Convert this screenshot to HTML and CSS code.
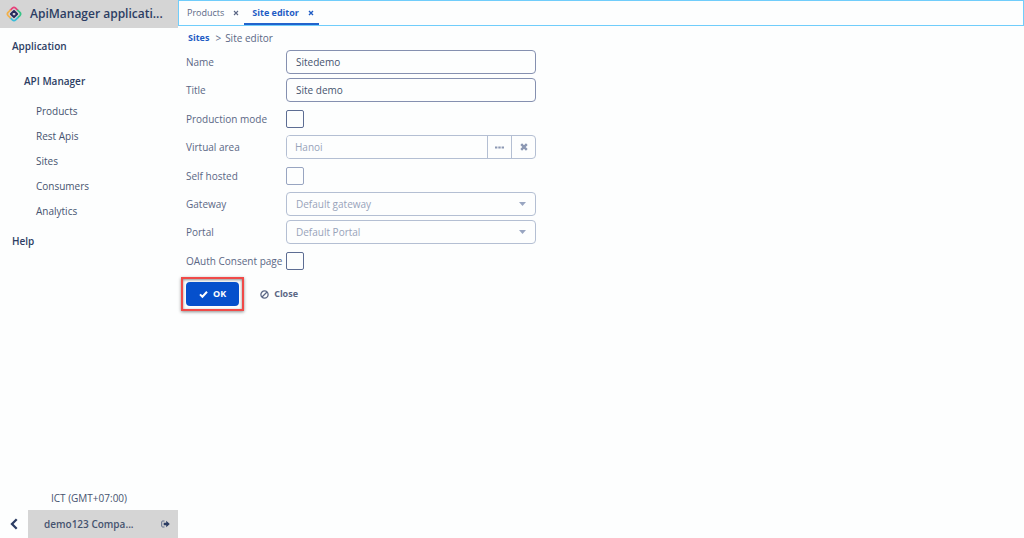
FILE: index.html
```html
<!DOCTYPE html>
<html lang="en">
<head>
<meta charset="utf-8">
<meta name="viewport" content="width=device-width, initial-scale=1">
<title>ApiManager application</title>
<link rel="stylesheet" href="styles.css">
</head>
<body>
<div class="app">
  <aside class="sidebar">
    <header class="brand">
      <svg class="brand-logo" viewBox="0 0 16 16" aria-hidden="true">
        <g fill="none" stroke-width="1.7" stroke-linecap="round" stroke-linejoin="round">
          <path stroke="#e8407a" d="M4.4 4.2 6.4 2.1Q8 .6 9.6 2.1L11.6 4.2"/>
          <path stroke="#35c486" d="M11.8 4.4 13.9 6.4Q15.4 8 13.9 9.6L11.8 11.6"/>
          <path stroke="#38bcd8" d="M11.6 11.8 9.6 13.9Q8 15.4 6.4 13.9L4.4 11.8"/>
          <path stroke="#f2b04a" d="M4.2 11.6 2.1 9.6Q.6 8 2.1 6.4L4.2 4.4"/>
          <path stroke="#252a5c" stroke-width="2" d="M8 4.9 11.1 8 8 11.1 4.9 8Z"/>
        </g>
      </svg>
      <h1 class="brand-title">ApiManager applicati...</h1>
    </header>
    <nav class="nav" aria-label="Main">
      <a class="nav-link nav-top" href="#">Application</a>
      <a class="nav-link nav-group" href="#">API Manager</a>
      <a class="nav-link nav-item" href="#">Products</a>
      <a class="nav-link nav-item" href="#">Rest Apis</a>
      <a class="nav-link nav-item" href="#">Sites</a>
      <a class="nav-link nav-item" href="#">Consumers</a>
      <a class="nav-link nav-item" href="#">Analytics</a>
      <a class="nav-link nav-top" href="#">Help</a>
    </nav>
    <div class="timezone">ICT (GMT+07:00)</div>
    <footer class="account">
      <button class="collapse" type="button" aria-label="Collapse menu">
        <svg class="collapse-icon" viewBox="0 0 8 12" aria-hidden="true"><path d="M6.7 1.3 2 6l4.7 4.7" fill="none" stroke="#2c3d63" stroke-width="2.3"/></svg>
      </button>
      <div class="user">
        <span class="user-name">demo123 Compa...</span>
        <button class="logout" type="button" aria-label="Log out">
          <svg class="logout-icon" viewBox="0 0 9 8" aria-hidden="true"><path d="M3.5 1H1.7Q.7 1 .7 2v4q0 1 1 1h1.8" fill="none" stroke="#5f6d8b"/><path d="M2.7 2.8h2.5V.8L8.8 4 5.2 7.2v-2H2.7z" fill="#2c3d63"/></svg>
        </button>
      </div>
    </footer>
  </aside>

  <main class="main">
    <div class="tabs">
      <div class="tab">
        <a class="tab-label" href="#">Products</a>
        <button class="tab-close" type="button" aria-label="Close Products"><svg class="close-icon" viewBox="0 0 6 6" aria-hidden="true"><path d="m1 1 4 4M5 1 1 5" stroke="currentColor" stroke-width="1.1"/></svg></button>
      </div>
      <div class="tab tab-active">
        <a class="tab-label" href="#">Site editor</a>
        <button class="tab-close" type="button" aria-label="Close Site editor"><svg class="close-icon" viewBox="0 0 6 6" aria-hidden="true"><path d="m1 1 4 4M5 1 1 5" stroke="currentColor" stroke-width="1.4"/></svg></button>
      </div>
    </div>

    <div class="content">
      <nav class="crumbs" aria-label="Breadcrumb">
        <a class="crumb-link" href="#">Sites</a><span class="crumb-sep">&gt;</span><span>Site editor</span>
      </nav>
      <form class="form">
        <div class="row">
          <label class="label" for="name">Name</label>
          <input class="field" id="name" type="text" value="Sitedemo">
        </div>
        <div class="row">
          <label class="label" for="title">Title</label>
          <input class="field" id="title" type="text" value="Site demo">
        </div>
        <div class="row row-check">
          <label class="label" for="production">Production mode</label>
          <input class="check" id="production" type="checkbox">
        </div>
        <div class="row">
          <label class="label" for="area">Virtual area</label>
          <div class="picker">
            <input class="picker-field" id="area" type="text" value="Hanoi" disabled>
            <button class="picker-button" type="button" aria-label="Choose virtual area" disabled><svg class="dots-icon" viewBox="0 0 9 3" aria-hidden="true"><path d="M0 .4h2.4v2.2H0zM3.3.4h2.4v2.2H3.3zM6.6.4H9v2.2H6.6z" fill="currentColor"/></svg></button>
            <button class="picker-button" type="button" aria-label="Clear virtual area" disabled><svg class="clear-icon" viewBox="0 0 8 8" aria-hidden="true"><path d="m1.2 1.2 5.6 5.6M6.8 1.2 1.2 6.8" stroke="currentColor" stroke-width="2.4"/></svg></button>
          </div>
        </div>
        <div class="row row-check">
          <label class="label" for="hosted">Self hosted</label>
          <input class="check" id="hosted" type="checkbox" disabled>
        </div>
        <div class="row">
          <label class="label" for="gateway">Gateway</label>
          <div class="select-box">
            <select class="field" id="gateway" disabled><option>Default gateway</option></select>
            <svg class="caret" viewBox="0 0 7 4" aria-hidden="true"><path d="M0 0h7L3.5 4z" fill="currentColor"/></svg>
          </div>
        </div>
        <div class="row">
          <label class="label" for="portal">Portal</label>
          <div class="select-box">
            <select class="field" id="portal" disabled><option>Default Portal</option></select>
            <svg class="caret" viewBox="0 0 7 4" aria-hidden="true"><path d="M0 0h7L3.5 4z" fill="currentColor"/></svg>
          </div>
        </div>
        <div class="row row-check">
          <label class="label" for="consent">OAuth Consent page</label>
          <input class="check" id="consent" type="checkbox">
        </div>
        <div class="actions">
          <div class="highlight">
            <button class="button button-primary" type="button">
              <svg class="button-icon" viewBox="0 0 9 9" aria-hidden="true"><path d="m1 4.4 2.4 2.4L8 1.8" fill="none" stroke="currentColor" stroke-width="2"/></svg>OK
            </button>
          </div>
          <button class="button" type="button">
            <svg class="button-icon" viewBox="0 0 9 9" aria-hidden="true"><g fill="none" stroke="currentColor" stroke-width="1.3"><circle cx="4.5" cy="4.5" r="3.6"/><path d="m2 7 5-5"/></g></svg>Close
          </button>
        </div>
      </form>
    </div>
  </main>
</div>
</body>
</html>
```

FILE: styles.css
```css
* {
  box-sizing: border-box;
}

body {
  margin: 0;
  background: #fdfefe;
  color: #5b6785;
  font: 10px/16px "Open Sans", "Noto Sans", sans-serif;
}

a {
  color: inherit;
  text-decoration: none;
}

button,
input,
select {
  margin: 0;
  color: inherit;
  font: inherit;
}

button {
  padding: 0;
  border: 0;
  background: none;
}

svg {
  display: block;
}

.app {
  display: flex;
  min-height: 100vh;
}

.sidebar {
  display: flex;
  flex: 0 0 178px;
  flex-direction: column;
  min-width: 0;
}

.brand {
  display: flex;
  align-items: center;
  gap: 8px;
  height: 28px;
  padding: 0 6px;
  background: #d5d5d5;
}

.brand-logo {
  flex: none;
  width: 16px;
  height: 16px;
}

.brand-title {
  margin: 0;
  color: #2c3d63;
  font-size: 12px;
  font-weight: 600;
  line-height: 20px;
  white-space: nowrap;
}

.nav {
  display: flex;
  flex: 1;
  flex-direction: column;
  padding-top: 6px;
}

.nav-link {
  color: #46536f;
  line-height: 25px;
}

.nav-top {
  padding-left: 12px;
  color: #2c3d63;
  font-weight: 600;
}

.nav-group {
  padding: 10px 0 5px 24px;
  color: #2c3d63;
  font-weight: 600;
}

.nav-item {
  padding-left: 36px;
}

.nav-item + .nav-top {
  padding-top: 5px;
}

.timezone {
  padding-bottom: 4px;
  color: #46536f;
  text-align: center;
}

.account {
  display: flex;
  height: 28px;
}

.collapse {
  display: grid;
  flex: 0 0 28px;
  place-items: center;
}

.collapse-icon {
  width: 8px;
  height: 12px;
}

.user {
  display: flex;
  flex: 1;
  align-items: center;
  justify-content: space-between;
  min-width: 0;
  padding: 0 8px 0 16px;
  background: #d5d5d5;
}

.user-name {
  color: #46536f;
  font-weight: 600;
  white-space: nowrap;
}

.logout-icon {
  width: 9px;
  height: 8px;
}

.main {
  flex: 1;
  min-width: 0;
}

.tabs {
  display: flex;
  height: 26px;
  border: 1px solid #70cdfb;
}

.tab {
  display: flex;
  align-items: center;
  gap: 9px;
  padding: 2px 5px 0 8px;
  border-bottom: 2px solid transparent;
  font-size: 9px;
}

.tab-active {
  border-bottom-color: #2263cc;
  color: #1f5cc4;
  font-weight: 700;
}

.close-icon {
  width: 6px;
  height: 6px;
}

.content {
  padding: 4px 8px;
}

.crumbs {
  display: flex;
  padding: 0 2px 4px;
}

.crumb-link {
  color: #1f5cc4;
  font-size: 9px;
  font-weight: 700;
}

.crumb-sep {
  padding: 0 4px 0 6px;
}

.form {
  display: flex;
  flex-direction: column;
  gap: 4px;
}

.row {
  display: grid;
  grid-template-columns: 100px minmax(0, 250px);
  align-items: center;
  min-height: 24px;
}

.row-check {
  min-height: 25px;
}

.label {
  white-space: nowrap;
}

.field {
  width: 100%;
  height: 24px;
  padding: 0 9px;
  border: 1px solid #8590b0;
  border-radius: 4px;
  background: #fdfefe;
  color: #46536f;
  appearance: none;
}

.field:disabled {
  border-color: #b4bfd3;
  color: #98a3ba;
  opacity: 1;
}

.check {
  width: 18px;
  height: 18px;
  border: 1px solid #5d6d93;
  border-radius: 2px;
  background: #fdfefe;
  appearance: none;
}

.check:disabled {
  border-color: #98a5c1;
}

.picker {
  display: flex;
  height: 24px;
  overflow: hidden;
  border: 1px solid #b4bfd3;
  border-radius: 4px;
}

.picker-field {
  flex: 1;
  min-width: 0;
  padding: 0 8px;
  border: 0;
  background: #fdfefe;
  color: #98a3ba;
}

.picker-button {
  display: grid;
  flex: 0 0 24px;
  place-items: center;
  border-left: 1px solid #b4bfd3;
  color: #8c98b3;
}

.dots-icon {
  width: 9px;
  height: 3px;
}

.clear-icon {
  width: 8px;
  height: 8px;
}

.select-box {
  display: grid;
  align-items: center;
}

.select-box > * {
  grid-area: 1 / 1;
}

.caret {
  justify-self: end;
  width: 7px;
  height: 4px;
  margin-right: 10px;
  color: #98a5c1;
  pointer-events: none;
}

.actions {
  display: flex;
  align-items: center;
  gap: 16px;
  margin-left: -5px;
}

.highlight {
  padding: 3px;
  border: 2px solid #f04a48;
  box-shadow: 0 1px 3px rgb(0 0 0 / 45%), inset 0 1px 3px rgb(0 0 0 / 45%);
}

.button {
  display: flex;
  align-items: center;
  gap: 5px;
  height: 24px;
  font-size: 9px;
  font-weight: 700;
}

.button-primary {
  padding: 0 13px;
  border-radius: 4px;
  background: #0550cc;
  color: #fff;
}

.button-icon {
  width: 9px;
  height: 9px;
}
```
